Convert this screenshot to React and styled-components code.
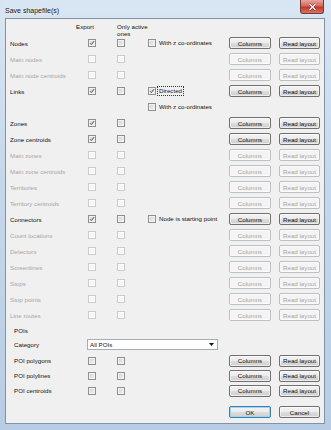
import React from "react";
import styled, { createGlobalStyle } from "styled-components";

const GlobalStyle = createGlobalStyle`
  html, body {
    margin: 0;
    padding: 0;
    background: #b9cde3;
  }
  * {
    box-sizing: border-box;
  }
`;

const Window = styled.div`
  width: 331px;
  height: 430px;
  display: flex;
  flex-direction: column;
  padding: 0 6px 6px 5px;
  background: linear-gradient(180deg, #d9e6f3 0%, #c6d8eb 40%, #b8cde3 100%);
  font-family: "Liberation Sans", Arial, sans-serif;
  overflow: hidden;
`;

const TitleBar = styled.div`
  height: 18px;
  display: flex;
  align-items: flex-start;
  margin-right: 1px;
`;

const Title = styled.span`
  font-size: 7px;
  color: #111;
  margin-top: 6.5px;
  text-shadow: 0 0 3px #fff;
`;

const CloseButton = styled.div`
  margin-left: auto;
  width: 24px;
  height: 14px;
  border: 1px solid #7a3a34;
  border-top: none;
  border-radius: 0 0 3px 3px;
  background: linear-gradient(180deg, #e7a49c 0%, #d46a5f 45%, #c0382c 55%, #d8736a 100%);
  display: flex;
  align-items: center;
  justify-content: center;
`;

const Client = styled.div`
  flex: 1;
  display: flex;
  flex-direction: column;
  background: #f0f0f0;
  border: 1px solid #8193a8;
  padding: 0 4px;
`;

const Grid = styled.div`
  display: grid;
  grid-template-columns: 78px 29px 31px 81px 42px 8px 41px;
  grid-auto-rows: ${(p) => p.$rowHeight || 16}px;
  margin-top: ${(p) => p.$top || 0}px;
  align-items: center;
  font-size: 6.2px;
`;

const HeaderText = styled.div`
  align-self: start;
  margin-top: 4px;
  line-height: 7px;
  color: #111;
  margin-left: ${(p) => p.$shift || 0}px;
  white-space: ${(p) => (p.$wrap ? "normal" : "nowrap")};
  width: ${(p) => (p.$wrap ? "34px" : "auto")};
`;

const Label = styled.div`
  color: ${(p) => (p.$disabled ? "#a6a6a6" : "#111")};
  padding-left: ${(p) => (p.$indent ? 4 : 0)}px;
  white-space: nowrap;
`;

const Box = styled.span`
  width: 8px;
  height: 8px;
  display: inline-flex;
  align-items: center;
  justify-content: center;
  border: 1px solid ${(p) => (p.$disabled ? "#cbcbcb" : "#8e8f8f")};
  background: ${(p) =>
    p.$disabled
      ? "#f6f6f6"
      : "linear-gradient(135deg, #cfcfcf 0%, #e6e6e6 60%, #f3f3f3 100%)"};
  box-shadow: inset 0 0 0 1px ${(p) => (p.$disabled ? "#fbfbfb" : "#f2f2f2")};
`;

const ExtraCell = styled.div`
  display: flex;
  align-items: center;
  gap: 2px;
  white-space: nowrap;
  color: #111;
`;

const ExtraText = styled.span`
  padding: 0 1px;
  outline: ${(p) => (p.$focus ? "1px dotted #333" : "none")};
  line-height: 8px;
`;

const Button = styled.div`
  height: 12px;
  display: flex;
  align-items: center;
  justify-content: center;
  border-radius: 2px;
  font-size: 6.2px;
  border: 1px solid ${(p) => (p.$default ? "#3c7fb1" : p.$disabled ? "#bcc0c3" : "#707070")};
  color: ${(p) => (p.$disabled ? "#a6a6a6" : "#111")};
  background: ${(p) =>
    p.$disabled
      ? "#f4f4f4"
      : "linear-gradient(180deg, #f3f3f3 0%, #ebebeb 50%, #dddddd 51%, #cfcfcf 100%)"};
  box-shadow: ${(p) =>
    p.$default ? "inset 0 0 0 1px #9fd5f4" : "inset 0 0 0 1px rgba(255,255,255,0.6)"};
`;

const Select = styled.div`
  grid-column: 2 / 5;
  width: 131px;
  height: 11px;
  margin-left: -1px;
  display: flex;
  align-items: center;
  justify-content: space-between;
  padding: 0 3px 0 2px;
  background: #fff;
  border: 1px solid #a5acb5;
  color: #111;
`;

const Footer = styled.div`
  display: grid;
  grid-template-columns: 219px 42px 8px 41px;
  margin-top: 8px;
`;

const Check = () => (
  <svg width="6" height="6" viewBox="0 0 6 6">
    <path d="M1 3.2 L2.4 4.6 L5.1 1.1" fill="none" stroke="#3a4258" strokeWidth="0.9" />
  </svg>
);

const CheckBox = ({ disabled, checked }) => (
  <Box $disabled={disabled}>{checked && <Check />}</Box>
);

const mainRows = [
  { label: "Nodes", on: true, extra: { text: "With z co-ordinates" } },
  { label: "Main nodes" },
  { label: "Main node centroids" },
  { label: "Links", on: true, extra: { text: "Directed", checked: true, focus: true } },
  { only: { text: "With z co-ordinates" } },
  { label: "Zones", on: true },
  { label: "Zone centroids", on: true },
  { label: "Main zones" },
  { label: "Main zone centroids" },
  { label: "Territories" },
  { label: "Territory centroids" },
  { label: "Connectors", on: true, extra: { text: "Node is starting point" } },
  { label: "Count locations" },
  { label: "Detectors" },
  { label: "Screenlines" },
  { label: "Stops" },
  { label: "Stop points" },
  { label: "Line routes" },
];

const poiRows = ["POI polygons", "POI polylines", "POI centroids"];

const Extra = ({ extra }) => (
  <ExtraCell>
    <CheckBox checked={extra.checked} />
    <ExtraText $focus={extra.focus}>{extra.text}</ExtraText>
  </ExtraCell>
);

const Row = ({ row }) => {
  if (row.only) {
    return (
      <>
        <span />
        <span />
        <span />
        <Extra extra={row.only} />
        <span />
        <span />
        <span />
      </>
    );
  }
  const off = !row.on;
  return (
    <>
      <Label $disabled={off}>{row.label}</Label>
      <CheckBox disabled={off} checked={row.on} />
      <CheckBox disabled={off} />
      {row.extra ? <Extra extra={row.extra} /> : <span />}
      <Button $disabled={off}>Columns</Button>
      <span />
      <Button $disabled={off}>Read layout</Button>
    </>
  );
};

export default function App() {
  return (
    <>
      <GlobalStyle />
      <Window>
        <TitleBar>
          <Title>Save shapefile(s)</Title>
          <CloseButton>
            <svg width="9" height="8" viewBox="0 0 9 8">
              <path d="M1.5 1 L7.5 7 M7.5 1 L1.5 7" stroke="#6a2a24" strokeWidth="2.4" />
              <path d="M1.5 1 L7.5 7 M7.5 1 L1.5 7" stroke="#fff" strokeWidth="1.3" />
            </svg>
          </CloseButton>
        </TitleBar>
        <Client>
          <Grid>
            <span />
            <HeaderText $shift={-12}>Export</HeaderText>
            <HeaderText $wrap>Only active ones</HeaderText>
            <span />
            <span />
            <span />
            <span />
            {mainRows.map((row, i) => (
              <Row key={i} row={row} />
            ))}
          </Grid>
          <Grid $rowHeight={14}>
            <Label $indent>POIs</Label>
            <span />
            <span />
            <span />
            <span />
            <span />
            <span />
            <Label $indent>Category</Label>
            <Select>
              <span>All POIs</span>
              <svg width="5" height="3" viewBox="0 0 5 3">
                <path d="M0 0 H5 L2.5 3 Z" fill="#111" />
              </svg>
            </Select>
            <span />
            <span />
            <span />
          </Grid>
          <Grid $rowHeight={15} $top={2}>
            {poiRows.map((name) => (
              <React.Fragment key={name}>
                <Label $indent>{name}</Label>
                <CheckBox />
                <CheckBox />
                <span />
                <Button>Columns</Button>
                <span />
                <Button>Read layout</Button>
              </React.Fragment>
            ))}
          </Grid>
          <Footer>
            <span />
            <Button $default>OK</Button>
            <span />
            <Button>Cancel</Button>
          </Footer>
        </Client>
      </Window>
    </>
  );
}
